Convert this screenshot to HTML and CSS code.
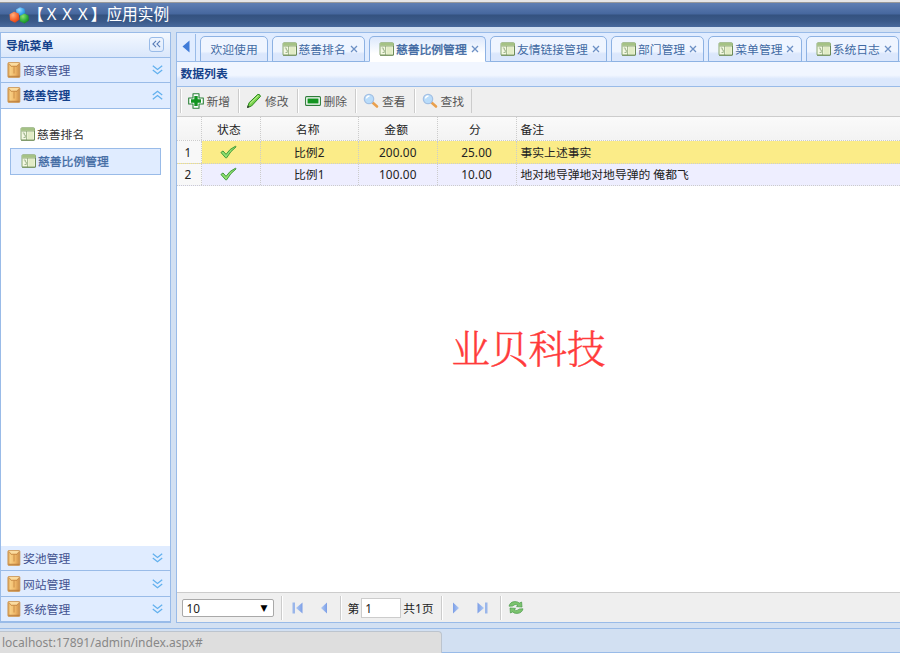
FILE: index.html
```
<!DOCTYPE html>
<html lang="zh-CN">
  <head>
    <meta charset="utf-8">
    <title>应用实例</title>
    <link rel="stylesheet" href="styles.css">
  </head>
  <body>
    <svg class="defs" width="0" height="0">
      <defs>
        <linearGradient id="g_box" x1="0" y1="0" x2="1" y2="0">
          <stop offset="0" stop-color="#d4974c"/><stop offset=".2" stop-color="#f8cf84"/>
          <stop offset=".6" stop-color="#f0b868"/><stop offset="1" stop-color="#c98c48"/>
        </linearGradient>
        <linearGradient id="g_arrow" x1="0" y1="0" x2="1" y2="0">
          <stop offset="0" stop-color="#b0caf4"/><stop offset="1" stop-color="#7c9ee6"/>
        </linearGradient>
        <linearGradient id="g_arrow_r" x1="0" y1="0" x2="1" y2="0">
          <stop offset="0" stop-color="#7c9ee6"/><stop offset="1" stop-color="#b0caf4"/>
        </linearGradient>
        <radialGradient id="g_orange" cx=".35" cy=".3" r=".8"><stop offset="0" stop-color="#ffb080"/><stop offset=".6" stop-color="#f4602a"/><stop offset="1" stop-color="#d43a10"/></radialGradient>
        <radialGradient id="g_blue" cx=".35" cy=".3" r=".8"><stop offset="0" stop-color="#a0dcff"/><stop offset=".6" stop-color="#3aa4ec"/><stop offset="1" stop-color="#1a78c8"/></radialGradient>
        <radialGradient id="g_green" cx=".35" cy=".3" r=".8"><stop offset="0" stop-color="#8ce070"/><stop offset=".6" stop-color="#2cac38"/><stop offset="1" stop-color="#108020"/></radialGradient>
      </defs>
      <symbol id="box" viewBox="0 0 14 16">
        <rect x=".9" y=".5" width="12" height="15" rx="1" fill="url(#g_box)" stroke="#cc9654" stroke-width=".8"/>
        <path d="M1.500 1h11l-2 2.800h-7z" fill="#fbdca0"/>
        <path d="M2 1.500l2 2.800h6l2-2.800M7 4.500v7" stroke="#c18340" stroke-width=".8" fill="none"/>
        <path d="M1.500 14.300h11" stroke="#b97c3c"/>
      </symbol>
      <symbol id="sheet" viewBox="0 0 16 14">
        <rect x="1" y=".8" width="13.500" height="12.400" rx=".8" fill="#f4f8e4" stroke="#8aa873"/>
        <path d="M1.200 1h13.100v2.800H1.200z" fill="#a5c285"/>
        <path d="M1.500 4.200h12.500M6.500 4v9" stroke="#93ab7c" stroke-width=".8"/>
        <path d="M7.500 5h6v7.500h-6z" fill="#e2ecc6"/>
        <path d="M2.800 6h1.500v2h1v2.500H3.500" fill="none" stroke="#8fa97c" stroke-width=".8"/>
        <path d="M1 13.200h13.500M14.500 4v9" stroke="#6d8a58"/>
      </symbol>
      <symbol id="down" viewBox="0 0 11 10">
        <path d="M.8.800l4.700 3.700L10.200.8M.8 5l4.700 3.700L10.200 5" fill="none" stroke="#62b0ee" stroke-width="1.300"/>
      </symbol>
      <symbol id="prev" viewBox="0 0 8 12"><path d="M7 .5v11L1 6z" fill="url(#g_arrow)"/></symbol>
      <symbol id="next" viewBox="0 0 8 12"><path d="M1 .5v11L7 6z" fill="url(#g_arrow_r)"/></symbol>
      <symbol id="check" viewBox="0 0 18 14">
        <path d="M1 7.500l2.200-1.600 3.200 3.600Q10 3.500 16.500.8L17 1.600Q11 6 7 13.200H6z" fill="#8fe070" stroke="#3c9636" stroke-width="1"/>
      </symbol>
      <symbol id="lens" viewBox="0 0 16 16">
        <path d="M9.500 9.500l4.500 4" stroke="#e9a04e" stroke-width="2.600" stroke-linecap="round"/>
        <circle cx="6" cy="6" r="4.700" fill="#b9dcfa" stroke="#a3c0e4" stroke-width="1.200"/>
        <path d="M3.500 5.500a3 3 0 0 1 3-2.500" stroke="#fff" stroke-width="1.400" fill="none"/>
      </symbol>
    </svg>

    <div class="browser-edge"></div>
    <header>
      <svg class="logo" viewBox="0 0 20 17">
        <path d="M7 2.500L11 .2l4.500 1.600.8 4.700L12 9 7.500 7z" fill="url(#g_blue)"/>
        <path d="M.5 7.200l4.500-2.400 4.700 1.800.9 5.900-4.600 3.300-5-2.500z" fill="url(#g_orange)"/>
        <path d="M11 8.800l4.500-2.300 4 2 .4 5-4.400 2.900-4.700-2.200z" fill="url(#g_green)"/>
      </svg>
      <h1>【ＸＸＸ】应用实例</h1>
    </header>

    <div class="layout">
      <aside class="west">
        <div class="west-title">导航菜单
          <span class="collapse"><svg viewBox="0 0 10 8"><path d="M4.500.5L1 4l3.500 3.500M9 .5L5.500 4 9 7.500" fill="none" stroke="#5a7db8" stroke-width="1.200"/></svg></span>
        </div>
        <div class="acc"><svg class="i-box"><use href="#box"/></svg>商家管理<svg class="i-down"><use href="#down"/></svg></div>
        <div class="acc open"><svg class="i-box"><use href="#box"/></svg>慈善管理<svg class="i-down"><use href="#down"/></svg></div>
        <div class="menu">
          <div class="menu-item"><svg class="i-sheet"><use href="#sheet"/></svg>慈善排名</div>
          <div class="menu-item selected"><svg class="i-sheet"><use href="#sheet"/></svg>慈善比例管理</div>
        </div>
        <div class="acc"><svg class="i-box"><use href="#box"/></svg>奖池管理<svg class="i-down"><use href="#down"/></svg></div>
        <div class="acc"><svg class="i-box"><use href="#box"/></svg>网站管理<svg class="i-down"><use href="#down"/></svg></div>
        <div class="acc last"><svg class="i-box"><use href="#box"/></svg>系统管理<svg class="i-down"><use href="#down"/></svg></div>
      </aside>

      <main>
        <div class="tabs">
          <div class="scroller"><svg viewBox="0 0 8 12"><path d="M7.500 0v12L.5 6z" fill="#3f7bd8"/></svg></div>
          <div class="tab home">欢迎使用</div>
          <div class="tab"><svg class="i-sheet"><use href="#sheet"/></svg>慈善排名<svg class="close" viewBox="0 0 8 8"><path d="M1 1l6 6M7 1L1 7"/></svg></div>
          <div class="tab wide active"><svg class="i-sheet"><use href="#sheet"/></svg>慈善比例管理<svg class="close" viewBox="0 0 8 8"><path d="M1 1l6 6M7 1L1 7"/></svg></div>
          <div class="tab wide"><svg class="i-sheet"><use href="#sheet"/></svg>友情链接管理<svg class="close" viewBox="0 0 8 8"><path d="M1 1l6 6M7 1L1 7"/></svg></div>
          <div class="tab"><svg class="i-sheet"><use href="#sheet"/></svg>部门管理<svg class="close" viewBox="0 0 8 8"><path d="M1 1l6 6M7 1L1 7"/></svg></div>
          <div class="tab"><svg class="i-sheet"><use href="#sheet"/></svg>菜单管理<svg class="close" viewBox="0 0 8 8"><path d="M1 1l6 6M7 1L1 7"/></svg></div>
          <div class="tab"><svg class="i-sheet"><use href="#sheet"/></svg>系统日志<svg class="close" viewBox="0 0 8 8"><path d="M1 1l6 6M7 1L1 7"/></svg></div>
        </div>
        <div class="list-title">数据列表</div>
        <div class="toolbar">
          <div class="tool"><svg viewBox="0 0 16 16"><path d="M5 .7h6V5h4.300v6H11v4.300H5V11H.7V5H5z" fill="#fff" stroke="#2b8038" stroke-width="1.100" stroke-linejoin="round"/><path d="M6.300 3h3.400v3.300H13v3.400H9.700V13H6.300V9.700H3V6.300h3.300z" fill="#129420"/></svg>新增</div>
          <div class="tool"><svg viewBox="0 0 16 16"><path d="M1.500 14.500l1.600-4.800L11.800 1.400q2.200-.4 2.700 2L5.500 13z" fill="#7bd34e" stroke="#2c8a1e"/><path d="M4 10.500l8.500-8" stroke="#c5f29a"/><path d="M1 15l.8-2.700 1.800 1.700z" fill="#333"/></svg>修改</div>
          <div class="tool"><svg viewBox="0 0 16 16"><rect x=".6" y="3.600" width="14.800" height="8.800" rx="1" fill="#fff" stroke="#2e7d3a" stroke-width="1.100"/><path d="M2.500 5.500h11v5h-11z" fill="#129420"/></svg>删除</div>
          <div class="tool"><svg><use href="#lens"/></svg>查看</div>
          <div class="tool"><svg><use href="#lens"/></svg>查找</div>
        </div>
        <div class="grid">
          <div class="row head"><div></div><div>状态</div><div>名称</div><div>金额</div><div>分</div><div>备注</div></div>
          <div class="row current"><div>1</div><div><svg class="i-check"><use href="#check"/></svg></div><div>比例2</div><div>200.00</div><div>25.00</div><div>事实上述事实</div></div>
          <div class="row alt"><div>2</div><div><svg class="i-check"><use href="#check"/></svg></div><div>比例1</div><div>100.00</div><div>10.00</div><div>地对地导弹地对地导弹的 俺都飞</div></div>
        </div>
        <div class="canvas"><div class="watermark">业贝科技</div></div>
        <div class="pager">
          <div class="page-size">10<span>▼</span></div>
          <i class="sep"></i>
          <div class="nav"><svg class="edge" viewBox="0 0 11 12"><path d="M.5.500h2.500v11H.5z" fill="#9ab6ea"/><path d="M10.500 .5v11L4 6z" fill="url(#g_arrow)"/></svg><svg class="step"><use href="#prev"/></svg></div>
          <i class="sep"></i>
          <div class="page-no">第<span class="num">1</span>共1页</div>
          <i class="sep"></i>
          <div class="nav"><svg class="step"><use href="#next"/></svg><svg class="edge" viewBox="0 0 11 12"><path d="M.5 .5v11L7 6z" fill="url(#g_arrow_r)"/><path d="M8 .5h2.500v11H8z" fill="#9ab6ea"/></svg></div>
          <i class="sep"></i>
          <svg class="refresh" viewBox="0 0 16 15"><g id="swirl"><path d="M1 6.200Q2 1.800 7 1.600q3 0 4.300 1.500L13.600 2l.4 5-5.500-.4 1.500-1.300Q7 3.200 4.600 6z" fill="#7cc46e" stroke="#4a994a" stroke-width=".7"/></g><use href="#swirl" transform="rotate(180 8 7.500)"/></svg>
        </div>
      </main>
    </div>
    <footer><div class="status">localhost:17891/admin/index.aspx#</div></footer>
  </body>
</html>
```
FILE: styles.css
```
* {
  box-sizing: border-box;
}
html, body {
  margin: 0;
  padding: 0;
}
body {
  display: flex;
  flex-direction: column;
  height: 653px;
  overflow: hidden;
  background: #d2e0f2;
  font: 11.8px/16px "Noto Sans", "Noto Sans CJK SC", sans-serif;
  color: #222;
}
svg {
  display: block;
  flex: none;
}
.defs {
  position: absolute;
}

/* header */
.browser-edge {
  height: 3px;
  background: #e6e6e6;
  border-bottom: 1px solid #999;
}
header {
  height: 24px;
  display: flex;
  align-items: center;
  padding-left: 9px;
  background: linear-gradient(#5f7fb3, #46679e 11px, #34527f 12px, #3a5988 18px, #48699c);
}
.logo {
  width: 20px;
  height: 17px;
}
h1 {
  margin: -3px 0 0 -1px;
  font-size: 15.7px;
  line-height: 22px;
  font-weight: normal;
  color: #fff;
}

.layout {
  flex: 1;
  display: flex;
  gap: 5px;
  padding-top: 5px;
  min-height: 0;
}

/* navigation */
.west {
  width: 170.500px;
  display: flex;
  flex-direction: column;
  border: 1px solid #99bbe8;
  background: #fff;
}
.west-title {
  height: 25px;
  display: flex;
  align-items: center;
  justify-content: space-between;
  padding: 0 6px 0 5px;
  font-weight: bold;
  color: #15428b;
  background: linear-gradient(#f3f8ff, #dae7fb);
  border-bottom: 1px solid #99bbe8;
}
.collapse {
  width: 15px;
  height: 15px;
  display: flex;
  align-items: center;
  justify-content: center;
  border: 1px solid #99bbe8;
  border-radius: 3px;
  margin-top: -2px;
}
.collapse svg {
  width: 9px;
  height: 8px;
}
.acc {
  height: 25.3px;
  flex: none;
  display: flex;
  align-items: center;
  padding: 0 7px 0 6px;
  color: #42528f;
  background: #e0ecff;
  border-bottom: 1px solid #99bbe8;
}
.acc.open {
  font-weight: bold;
  color: #15428b;
}
.i-box {
  width: 14px;
  height: 16px;
  margin-right: 2px;
}
.i-down {
  width: 11px;
  height: 10px;
  margin-left: auto;
}
.open .i-down {
  transform: rotate(180deg);
}
.menu {
  flex: 1;
  padding: 12px 9px 0;
}
.menu-item {
  height: 27px;
  display: flex;
  align-items: center;
  padding-left: 9px;
  color: #333;
  border: 1px solid transparent;
}
.menu-item.selected {
  padding-left: 10px;
  color: #416aa3;
  -webkit-text-stroke: .3px;
  background: #e0ecff;
  border-color: #99bbe8;
}
.i-sheet {
  width: 16px;
  height: 14px;
  margin-right: 1px;
}

/* tabs */
main {
  flex: 1;
  min-width: 0;
  display: flex;
  flex-direction: column;
  border: 1px solid #99bbe8;
  border-right: 0;
  background: #fff;
}
.tabs {
  height: 29px;
  flex: none;
  display: flex;
  align-items: flex-end;
  gap: 4px;
  background: #e0ecff;
  box-shadow: inset 0 -1px #99bbe8;
}
.scroller {
  width: 19px;
  height: 28px;
  display: flex;
  align-items: center;
  padding-left: 5px;
  border-right: 1px solid #99bbe8;
}
.scroller svg {
  width: 8px;
  height: 13px;
  margin-top: -4px;
}
.tab {
  flex: none;
  width: 93.400px;
  height: 26px;
  display: flex;
  align-items: center;
  padding: 0 0 1px 9px;
  white-space: nowrap;
  color: #416aa3;
  background: linear-gradient(#eff5ff 60%, #dbe7fc 70%);
  border: 1px solid #8db2e3;
  border-radius: 5px 5px 0 0;
}
.tab.home {
  width: 68px;
  padding-left: 10px;
}
.tab.wide {
  width: 117px;
}
.tab.active {
  -webkit-text-stroke: .4px;
  background: linear-gradient(#dce8fc, #fff 70%);
  border-bottom-color: #fff;
}
.close {
  width: 8px;
  height: 8px;
  margin-left: 4px;
}
.close path {
  stroke: #6c90c5;
  stroke-width: 1.300;
}
.list-title {
  height: 25px;
  flex: none;
  padding: 3px 4px;
  font-weight: bold;
  color: #15428b;
  background: linear-gradient(#f1f6ff 55%, #dce8fc 70%);
  border-bottom: 1px solid #99bbe8;
}

/* toolbar */
.toolbar {
  height: 30px;
  flex: none;
  display: flex;
  align-items: center;
  padding: 0 0 2px 3px;
  background: #efefef;
  border-bottom: 1px solid #ccc;
}
.tool {
  width: 58.500px;
  height: 24px;
  display: flex;
  align-items: center;
  gap: 3px;
  padding-left: 7px;
  color: #555;
  border-left: 1px solid #ccc;
  box-shadow: inset 1px 0 #fff;
}
.tool:last-child {
  border-right: 1px solid #ccc;
}
.tool svg {
  width: 16px;
  height: 16px;
}

/* data grid */
.row {
  height: 22.500px;
  display: grid;
  grid-template-columns: 25px 59px 98.500px 78.500px 79px 1fr;
  border-bottom: 1px dotted #ccc;
}
.row > div {
  display: flex;
  align-items: center;
  justify-content: center;
  letter-spacing: .1px;
  border-right: 1px dotted #ccc;
}
.row > div:last-child {
  justify-content: flex-start;
  padding-left: 4px;
  letter-spacing: 0;
  border-right: 0;
}
.row > div:first-child {
  padding-right: 1px;
  background: #f8f8f8;
}
.row.head {
  height: 24px;
  background: linear-gradient(#fafafa, #f3f3f3);
}
.row.head > div {
  padding-right: 3px;
  background: none;
}
.row.current {
  background: #fbec88;
}
.row.alt {
  background: #eeeeff;
}
.i-check {
  width: 17px;
  height: 14px;
  margin-right: 4px;
}
.canvas {
  flex: 1;
}
.watermark {
  padding: 132px 0 0 275px;
  font: 300 38.500px/58px "Noto Serif CJK SC", "Noto Sans CJK SC", serif;
  color: #ff3b3b;
  -webkit-text-stroke: .4px;
}

/* pager */
.pager {
  height: 30px;
  flex: none;
  display: flex;
  align-items: center;
  padding-left: 5px;
  background: #efefef;
  border-top: 1px solid #ccc;
}
.page-size {
  width: 92px;
  height: 18px;
  display: flex;
  justify-content: space-between;
  padding: 0 5px 0 4px;
  background: #fff;
  border: 1px solid #a9a9a9;
  border-radius: 2px;
  margin-right: 7px;
}
.page-size span {
  font: 9px/16px "DejaVu Sans", sans-serif;
  color: #000;
}
.sep {
  width: 2px;
  height: 24px;
  border-left: 1px solid #ccc;
  border-right: 1px solid #fff;
}
.nav {
  width: 57px;
  display: flex;
  gap: 17px;
  padding-left: 9px;
}
.edge {
  width: 11px;
  height: 12px;
}
.step {
  width: 8px;
  height: 12px;
}
.page-no {
  width: 99px;
  display: flex;
  align-items: center;
  padding-left: 6px;
}
.num {
  width: 40px;
  height: 20px;
  padding: 1px 3px;
  margin: 0 2px 0 2px;
  background: #fff;
  border: 1px solid #ccc;
}
.refresh {
  width: 16px;
  height: 15px;
  margin-left: 6px;
}

/* status line */
footer {
  height: 30px;
  padding-top: 8px;
  background: linear-gradient(transparent 5px, #99bbe8 5px, #99bbe8 6px, transparent 6px);
  border-bottom: 1px solid #99bbe8;
}
.status {
  width: 442px;
  height: 22px;
  padding: 3px 2px;
  font-size: 12px;
  color: #888;
  background: #dedede;
  border: 1px solid #bcc4ce;
  border-left: 0;
  border-bottom: 0;
  border-radius: 0 4px 0 0;
}
```
